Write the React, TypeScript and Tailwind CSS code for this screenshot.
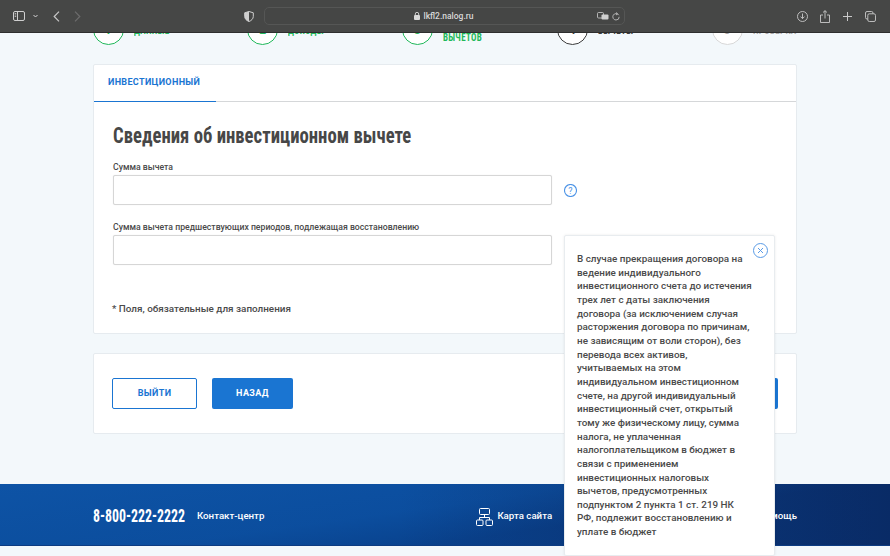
import React from "react";

const roboto = "font-['Roboto','Liberation_Sans',sans-serif]";
const narrow = "font-['Roboto','Liberation_Sans',sans-serif] [font-stretch:75%]";

function Step({ n, label, color, text }: { n: string; label: React.ReactNode; color: string; text: string }) {
  return (
    <div className="flex w-[154.750px] items-center gap-[10px]">
      <div className={`flex h-[31px] w-[31px] shrink-0 items-center justify-center rounded-full border-[1.5px] bg-white text-[12px] font-bold ${color}`}>{n}</div>
      <div className={`mt-[2px] w-[60px] origin-left scale-x-[0.78] whitespace-nowrap text-[11.500px] font-bold leading-[13px] tracking-[0.4px] ${narrow} ${text}`}>{label}</div>
    </div>
  );
}

function Chrome() {
  return (
    <div className="relative z-10 flex h-[32px] items-center bg-[#464746] shadow-[0_1px_0_#2e2e2e] text-[#c9c9c9]">
      <svg className="ml-[13px] shrink-0" width="12" height="10" viewBox="0 0 12 10" fill="none" stroke="#cfcfcf" strokeWidth="1">
        <rect x="0.5" y="0.5" width="11" height="9" rx="1.5" />
        <path d="M4.5 .5v9" />
        <path d="M1.7 2.5h1.5M1.7 4h1.5M1.7 5.5h1.5" strokeWidth=".8" />
      </svg>
      <svg className="ml-[8px] shrink-0" width="5" height="4" viewBox="0 0 5 4" fill="none" stroke="#d5d5d5" strokeWidth="1"><path d="M.5 1l2 2 2-2" /></svg>
      <svg className="ml-[15px] shrink-0" width="7" height="11" viewBox="0 0 7 11" fill="none" stroke="#c8c8c8" strokeWidth="1.2"><path d="M6 .7L1.2 5.5 6 10.3" /></svg>
      <svg className="ml-[14px] shrink-0" width="7" height="11" viewBox="0 0 7 11" fill="none" stroke="#6c6c6c" strokeWidth="1.2"><path d="M1 .7l4.8 4.8L1 10.3" /></svg>
      <svg className="ml-[163px] shrink-0" width="10" height="11" viewBox="0 0 10 11"><path d="M5 .5l4.3 1.3v3.6c0 2.5-2 4.2-4.3 5.1C2.7 9.6.7 7.9.7 5.4V1.8z" fill="none" stroke="#cfcfcf" /><path d="M5 .5v10C2.7 9.6.7 7.9.7 5.4V1.8z" fill="#cfcfcf" /></svg>
      <div className="ml-[10px] flex h-[18px] w-[361px] shrink-0 items-center rounded-[5px] border border-[#555655] bg-[#454645] pr-[4px]">
        <div className={`flex flex-1 items-center justify-center gap-[3px] pl-[26px] text-[8.500px] font-medium text-[#d8d8d8] ${roboto}`}>
          <svg width="6" height="8" viewBox="0 0 6 8" fill="#d8d8d8"><rect y="3" width="6" height="5" rx="1" /><path d="M1.3 3.2V2a1.7 1.7 0 013.4 0v1.2" fill="none" stroke="#d8d8d8" strokeWidth=".9" /></svg>
          <span>lkfl2.nalog.ru</span>
        </div>
        <svg width="12" height="9" viewBox="0 0 12 9"><rect x=".5" y=".5" width="6" height="5.500" rx="1" fill="none" stroke="#cfcfcf" strokeWidth=".8" /><rect x="4.500" y="2.500" width="7" height="5" rx="1" fill="#cfcfcf" /></svg>
        <svg className="ml-[3px]" width="8" height="9" viewBox="0 0 8 9" fill="none" stroke="#bdbdbd" strokeWidth=".9"><path d="M6.8 3.2A3.2 3.2 0 104 8a3.200 3.200 0 003.200-3.200M4 .5l1.600 1.300L4 3" /></svg>
      </div>
      <svg className="ml-[172px] shrink-0" width="11" height="11" viewBox="0 0 11 11" fill="none" stroke="#c9c9c9" strokeWidth=".9"><circle cx="5.500" cy="5.500" r="5" /><path d="M5.500 2.500v5M3.500 5.600l2 2 2-2" /></svg>
      <svg className="ml-[12px] shrink-0" width="10" height="13" viewBox="0 0 10 13" fill="none" stroke="#c9c9c9" strokeWidth=".9"><path d="M3 5H.5v7.500h9V5H7M5 8.500V.7M3 2.500L5 .7l2 1.800" /></svg>
      <svg className="ml-[13px] shrink-0" width="9" height="9" viewBox="0 0 9 9" stroke="#c9c9c9" strokeWidth="1"><path d="M4.500 0v9M0 4.500h9" /></svg>
      <svg className="ml-[13px] shrink-0" width="11" height="11" viewBox="0 0 11 11" fill="none" stroke="#c9c9c9" strokeWidth=".9"><rect x="2.800" y="2.800" width="7.700" height="7.700" rx="1.500" /><path d="M2.800 8H2A1.500 1.500 0 01.5 6.500V2A1.500 1.500 0 012 .5h4.500A1.500 1.500 0 018 2v.8" /></svg>
    </div>
  );
}

function Field({ label, help }: { label: string; help?: boolean }) {
  return (
    <div className="mb-[16px]">
      <div className="mb-px text-[8.700px] font-medium leading-[13px] text-[#4a4a4a]">{label}</div>
      <div className="flex items-center">
        <div className="h-[30px] w-[439px] rounded-[2px] border border-[#d6d6d6] bg-white shadow-[0_0_1px_#ddd]" />
        {help && (
          <svg className="ml-[12px]" width="13" height="13" viewBox="0 0 13 13" fill="none">
            <circle cx="6.500" cy="6.500" r="6" stroke="#4c93e6" strokeWidth="1.100" />
            <text x="6.500" y="9.600" textAnchor="middle" fontSize="9" fill="#4c93e6" fontFamily="Roboto">?</text>
          </svg>
        )}
      </div>
    </div>
  );
}

export default function App() {
  return (
    <div className={`relative h-[556px] w-[890px] overflow-hidden bg-[#f3f8fb] ${roboto}`}>
      <Chrome />
      <div className="flex h-[32px] items-start">
        <div className="-mt-[18px] ml-[92.500px] flex">
          <Step n="1" label="ДАННЫЕ" color="border-[#1fb85a] text-[#1fb85a]" text="text-[#1fb85a]" />
          <Step n="2" label="ДОХОДЫ" color="border-[#1fb85a] text-[#1fb85a]" text="text-[#1fb85a]" />
          <Step n="3" label={<>ВИДЫ<br />ВЫЧЕТОВ</>} color="border-[#1fb85a] text-[#1fb85a]" text="text-[#1fb85a]" />
          <Step n="4" label="ВЫЧЕТЫ" color="border-[#3c3c3c] text-[#3c3c3c]" text="text-[#3c3c3c]" />
          <Step n="5" label="ПРОВЕРКА" color="border-[#d8d8d8] text-[#a8a8a8]" text="text-[#a8a8a8]" />
        </div>
      </div>

      <div className="relative mx-[93px] h-[270px] rounded-[2px] border border-[#e6ebef] bg-white">
        <div className="border-b border-[#d5d7d9]">
          <div className="-mb-px inline-block h-[37px] w-[122px] border-b-[1.5px] border-[#1a75d2] pl-[14px] pt-[11px] text-[9px] font-bold leading-[13px] tracking-[0.35px] text-[#1a75d2]">
            ИНВЕСТИЦИОННЫЙ
          </div>
        </div>
        <div className="pl-[19px]">
          <h1 className={`mt-[19px] mb-[11px] origin-left scale-x-[0.85] whitespace-nowrap text-[22px] font-bold leading-[29px] text-[#474747] ${narrow}`}>Сведения об инвестиционном вычете</h1>
          <Field label="Сумма вычета" help />
          <Field label="Сумма вычета предшествующих периодов, подлежащая восстановлению" />
          <div className="mt-[37px] -ml-px text-[9.900px] font-medium leading-[14px] text-[#4a4a4a]">* Поля, обязательные для заполнения</div>
        </div>
      </div>

      <div className="mx-[93px] mt-[19px] flex h-[81px] items-center justify-between rounded-[2px] border border-[#e6ebef] bg-white pl-[18px] pr-[18px]">
        <div className="flex gap-[15px]">
          <div className="flex h-[31px] w-[85px] items-center justify-center rounded-[2px] border border-[#1a75d2] bg-white pt-px text-[9px] font-bold tracking-[0.4px] text-[#1a75d2]">ВЫЙТИ</div>
          <div className="flex h-[31px] w-[81px] items-center justify-center rounded-[2px] bg-[#1a75d2] pt-px text-[9px] font-bold tracking-[0.4px] text-white">НАЗАД</div>
        </div>
        <div className="h-[31px] w-[81px] rounded-[2px] bg-[#1a75d2]" />
      </div>

      <div className="mt-[50px] flex h-[62px] items-center border-b border-[#0d3c82] bg-[linear-gradient(172deg,rgba(20,100,190,0.35)_0%,rgba(20,100,190,0.14)_45%,rgba(5,35,95,0.2)_65%,rgba(5,35,95,0.2)_100%),linear-gradient(90deg,#0a4a98_0%,#0a4a99_45%,#0b3a7e_75%,#0a2d68_100%)] pl-[93px] pr-[93px] pt-[4px] text-white">
        <span className="w-[92px] shrink-0">
          <span className={`inline-block origin-left scale-x-[0.77] whitespace-nowrap text-[18px] font-bold leading-none ${narrow}`}>8-800-222-2222</span>
        </span>
        <span className="ml-[12px] text-[9.700px] font-medium">Контакт-центр</span>
        <svg className="ml-[212px] shrink-0" width="17" height="18" viewBox="0 0 17 18" fill="none" stroke="#fff" strokeWidth="1">
          <rect x="3.500" y=".5" width="10" height="6" rx="1" />
          <rect x=".5" y="12" width="6.500" height="5.500" rx="1" />
          <rect x="10" y="12" width="6.500" height="5.500" rx="1" />
          <path d="M8.500 6.500v3M3.500 12V9.500h10V12" />
        </svg>
        <span className="ml-[4px] text-[9.700px] font-medium">Карта сайта</span>
        <span className="ml-auto text-[9.700px] font-medium">Помощь</span>
      </div>

      <div className="absolute left-[564px] top-[235px] h-[321px] w-[211px] rounded-[2px] border border-[#e8ecef] bg-white pl-[12px] pt-[16px] shadow-[0_0_3px_rgba(0,0,0,0.08)]">
        <svg className="absolute right-[6px] top-[7px]" width="15" height="15" viewBox="0 0 15 15" fill="none" stroke="#5a9be6">
          <circle cx="7.500" cy="7.500" r="7" />
          <path d="M5 5l5 5M10 5l-5 5" />
        </svg>
        <p className="w-[190px] text-[9.900px] font-medium leading-[13.650px] text-[#4a4a4a]">
          В случае прекращения договора на<br />ведение индивидуального<br />инвестиционного счета до истечения<br />трех лет с даты заключения<br />договора (за исключением случая<br />расторжения договора по причинам,<br />не зависящим от воли сторон), без<br />перевода всех активов,<br />учитываемых на этом<br />индивидуальном инвестиционном<br />счете, на другой индивидуальный<br />инвестиционный счет, открытый<br />тому же физическому лицу, сумма<br />налога, не уплаченная<br />налогоплательщиком в бюджет в<br />связи с применением<br />инвестиционных налоговых<br />вычетов, предусмотренных<br />подпунктом 2 пункта 1 ст. 219 НК<br />РФ, подлежит восстановлению и<br />уплате в бюджет
        </p>
      </div>
    </div>
  );
}
